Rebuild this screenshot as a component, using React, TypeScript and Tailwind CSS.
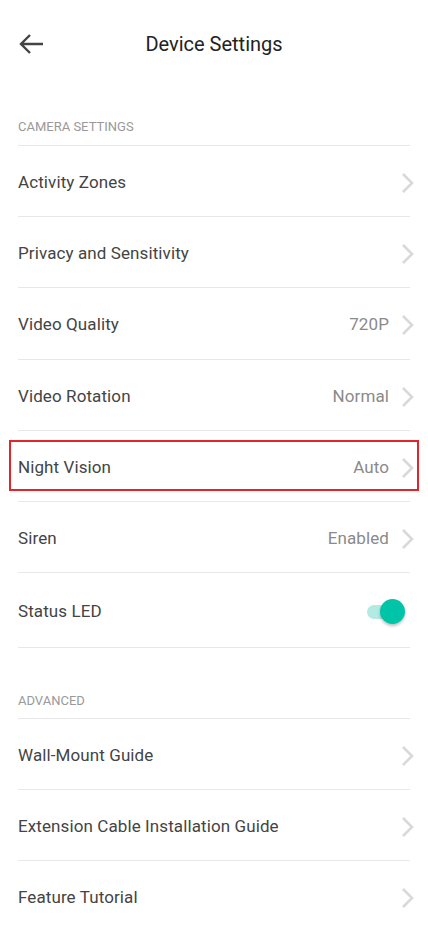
import React from 'react';

const font = { fontFamily: 'Roboto, "Noto Sans", sans-serif' };

type Row = { label: string; value?: string; h?: string; highlight?: boolean };

const cameraRows: Row[] = [
  { label: 'Activity Zones' },
  { label: 'Privacy and Sensitivity' },
  { label: 'Video Quality', value: '720P', h: 'h-[72px]' },
  { label: 'Video Rotation', value: 'Normal' },
  { label: 'Night Vision', value: 'Auto', highlight: true },
  { label: 'Siren', value: 'Enabled' },
];

const advancedRows: Row[] = [
  { label: 'Wall-Mount Guide' },
  { label: 'Extension Cable Installation Guide' },
  { label: 'Feature Tutorial' },
];

function Chevron() {
  return (
    <svg width="14" height="22" viewBox="0 0 14 22" className="-mr-[5px] ml-[12px] shrink-0">
      <path d="M2 2l9 9-9 9" fill="none" stroke="#d9d9d9" strokeWidth="2.6" />
    </svg>
  );
}

function SettingRow({ row }: { row: Row }) {
  return (
    <div className={`relative mx-[18px] flex items-center border-t border-[#e8e8e8] pt-[3px] ${row.h ?? 'h-[71px]'}`}>
      <span className="flex-1 text-[17px] tracking-[0.1px] text-[#444]">{row.label}</span>
      {row.value && <span className="text-[17px] tracking-[0.1px] text-[#8a8a8a]">{row.value}</span>}
      <Chevron />
      {row.highlight && (
        <div className="pointer-events-none absolute -left-[9px] -right-[9px] top-[9px] bottom-[10px] border-2 border-[#e5232b]" />
      )}
    </div>
  );
}

export default function App() {
  return (
    <div className="min-h-[929px] w-[428px] bg-white" style={font}>
      {/* Header */}
      <div className="relative flex h-[88px] items-center justify-center">
        <svg width="26" height="22" viewBox="0 0 26 22" className="absolute left-[19px] top-[33px]">
          <path d="M24 11H3M11 2l-9 9 9 9" fill="none" stroke="#444" strokeWidth="2.4" />
        </svg>
        <h1 className="text-[20px] text-[#222]">Device Settings</h1>
      </div>

      {/* Camera settings */}
      <div className="px-[18px] pt-[31px] pb-[10px] text-[13px] leading-[16px] text-[#999]">CAMERA SETTINGS</div>
      {cameraRows.map((r) => (
        <SettingRow key={r.label} row={r} />
      ))}
      <div className="mx-[18px] flex h-[76px] items-center border-y border-[#e8e8e8] pt-[3px]">
        <span className="flex-1 text-[17px] tracking-[0.1px] text-[#444]">Status LED</span>
        <div className="relative mr-[11px] h-[25px] w-[32px]">
          <div className="absolute left-0 right-[6px] top-[6px] h-[14px] rounded-full bg-[#b3ebe2]" />
          <div className="absolute right-[-6px] top-0 h-[25px] w-[25px] rounded-full bg-[#00c4a8] shadow-[0_2px_3px_rgba(0,0,0,0.25)]" />
        </div>
      </div>

      {/* Advanced */}
      <div className="px-[18px] pt-[45px] pb-[9px] text-[13px] leading-[16px] text-[#999]">ADVANCED</div>
      {advancedRows.map((r) => (
        <SettingRow key={r.label} row={r} />
      ))}
    </div>
  );
}
